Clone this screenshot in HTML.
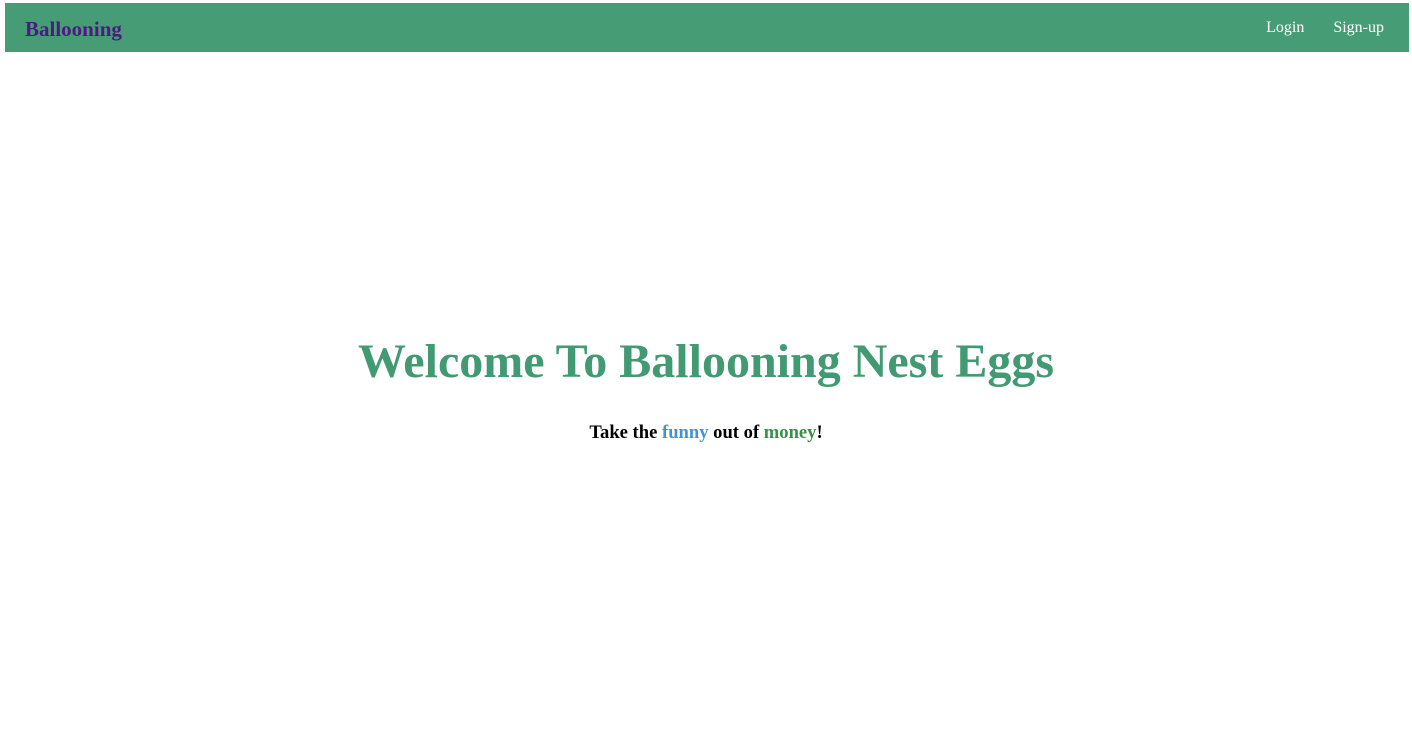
<!DOCTYPE html>
<html><head><style>
html,body{margin:0;padding:0;background:#fff;}
body{font-family:"Liberation Serif",serif;width:1412px;height:729px;position:relative;overflow:hidden;}
.nav{position:absolute;left:5px;top:3px;width:1404px;height:49px;background:#469c75;}
.brand{position:absolute;left:20px;top:14px;font-size:21px;font-weight:bold;color:#4b1a84;}
.links{position:absolute;right:25px;top:16px;font-size:16px;color:#fff;}
.links span{margin-left:29px;}
h1{position:absolute;left:0;width:1412px;top:332px;margin:0;text-align:center;font-size:48px;font-weight:bold;color:#429a72;line-height:60px;}
p{position:absolute;left:0;width:1412px;top:421px;margin:0;text-align:center;font-size:18.6px;font-weight:bold;line-height:24px;}
</style></head><body>
<div class="nav"><div class="brand">Ballooning</div><div class="links"><span>Login</span><span>Sign-up</span></div></div>
<h1>Welcome To Ballooning Nest Eggs</h1>
<p>Take the <span style="color:#3d95d6">funny</span> out of <span style="color:#3c8f4a">money</span>!</p>
</body></html>
